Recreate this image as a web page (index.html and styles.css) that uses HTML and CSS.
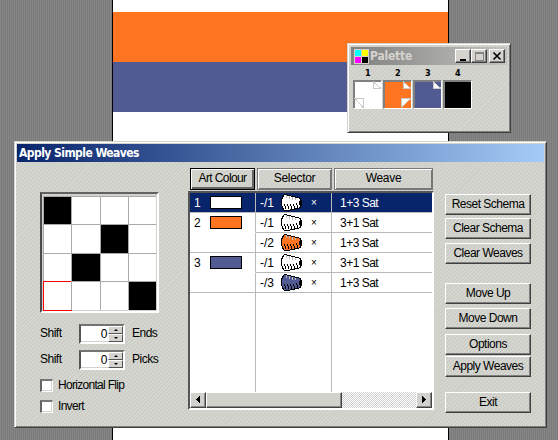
FILE: index.html
```html
<!DOCTYPE html>
<html lang="en">
<head>
<meta charset="utf-8">
<title>Apply Simple Weaves</title>
<link rel="stylesheet" href="styles.css">
</head>
<body>
<svg class="defs" width="0" height="0">
  <symbol id="cone" viewBox="0 0 22 19">
    <path class="yarn" d="M3.5 1.5 8.500 2.500 19.500 5.500 20.500 8V11L19.500 14.500 12 16.500 6 17.500 3 17 1.500 15 .5 11V7L1.500 4Z"/>
    <path class="thread" d="M3.500 11v2m1 0v3M6.500 11v2m1 0v3M9.500 11v2m1 0v3M12.500 11v2m1 0v3M15.500 10v2m1 0v3"/>
    <path class="shine" d="M5.500 2v3m3-2v3m3-2v3m3-2v2"/>
    <path d="M18 5h2v2h1v6h-1v2h-1V12h-1V8h1V6h-1z"/>
  </symbol>
</svg>
<main class="desktop">
  <section class="artwork"><div class="orange"></div><div class="indigo"></div></section>

  <section class="window palette">
    <header class="palette-title">
      <svg class="app-icon" width="15" height="15" shape-rendering="crispEdges"><path fill="#d4d0c8" d="M0 0h15v15H0z"/><path fill="#0ff" d="M1 1h6v6H1z"/><path fill="#ff0" d="M8 1h6v6H8z"/><path fill="#f0f" d="M1 8h6v6H1z"/><path d="M8 8h6v6H8z"/></svg>
      <span class="palette-name">Palette</span>
      <span class="caption"><svg width="12" height="10" shape-rendering="crispEdges"><path d="M3 8h6v2H3z"/></svg></span>
      <span class="caption"><svg width="12" height="10" shape-rendering="crispEdges"><path class="maximize" d="M2.5 1.5h8v8h-8zM2 2.5h9"/></svg></span>
      <span class="caption close"><svg width="12" height="10"><path class="cross" d="M2.5 1.5l7 7m0-7l-7 7"/></svg></span>
    </header>
    <div class="swatches">
      <div class="swatch"><b>1</b><svg width="29" height="29" shape-rendering="crispEdges"><path fill="#fff" d="M1 1h26v26H1z"/><path class="fold" d="M19.500 1v6.500H27zM1 17.500h8.500V27z"/></svg></div>
      <div class="swatch"><b>2</b><svg width="29" height="29" shape-rendering="crispEdges"><path fill="#ff7421" d="M1 1h26v26H1z"/><path class="fold" d="M19.500 1v6.500H27zM17.500 26v-8.500H27z"/></svg></div>
      <div class="swatch"><b>3</b><svg width="29" height="29" shape-rendering="crispEdges"><path fill="#525a94" d="M1 1h26v26H1z"/><path class="fold" d="M19.500 1v6.500H27z"/></svg></div>
      <div class="swatch"><b>4</b><svg width="29" height="29" shape-rendering="crispEdges"><path d="M1 1h26v26H1z"/></svg></div>
    </div>
  </section>

  <section class="window dialog">
    <header class="dialog-title"><span>Apply Simple Weaves</span></header>
    <div class="body">
      <div class="controls">
        <div class="weave-frame"><div class="weave">
          <i class="on"></i><i></i><i></i><i></i>
          <i></i><i></i><i class="on"></i><i></i>
          <i></i><i class="on"></i><i></i><i></i>
          <i class="cursor"></i><i></i><i></i><i class="on"></i>
        </div></div>
        <div class="shift"><label>Shift</label><div class="spin"><span>0</span><div class="steps"><i class="up"></i><i class="down"></i></div></div><label>Ends</label></div>
        <div class="shift"><label>Shift</label><div class="spin"><span>0</span><div class="steps"><i class="up"></i><i class="down"></i></div></div><label>Picks</label></div>
        <label class="check"><i></i><span>Horizontal Flip</span></label>
        <label class="check"><i></i><span>Invert</span></label>
      </div>

      <div class="list">
        <div class="heads"><div class="head focus">Art Colour</div><div class="head">Selector</div><div class="head">Weave</div></div>
        <div class="list-frame">
          <div class="table">
            <div class="row selected"><div class="art"><span>1</span><i class="chip white"></i></div><div class="sel"><span>-/1</span><svg class="cone"><use href="#cone"/></svg><b>×</b></div><div class="name">1+3 Sat</div></div>
            <div class="row joined"><div class="art"><span>2</span><i class="chip orange"></i></div><div class="sel"><span>-/1</span><svg class="cone"><use href="#cone"/></svg><b>×</b></div><div class="name">3+1 Sat</div></div>
            <div class="row"><div class="art"></div><div class="sel"><span>-/2</span><svg class="cone orange-yarn"><use href="#cone"/></svg><b>×</b></div><div class="name">1+3 Sat</div></div>
            <div class="row joined"><div class="art"><span>3</span><i class="chip indigo"></i></div><div class="sel"><span>-/1</span><svg class="cone"><use href="#cone"/></svg><b>×</b></div><div class="name">3+1 Sat</div></div>
            <div class="row"><div class="art"></div><div class="sel"><span>-/3</span><svg class="cone indigo-yarn"><use href="#cone"/></svg><b>×</b></div><div class="name">1+3 Sat</div></div>
            <div class="row rest"><div class="art"></div><div class="sel"></div><div class="name"></div></div>
          </div>
          <div class="scroll"><div class="arrow"><svg width="5" height="8" shape-rendering="crispEdges"><path d="M4 0v7L0 4V3z"/></svg></div><div class="thumb"></div><div class="track"></div><div class="arrow"><svg width="5" height="8" shape-rendering="crispEdges"><path d="M0 0v7l4-3V3z"/></svg></div></div>
        </div>
      </div>

      <div class="actions">
        <button>Reset Schema</button>
        <button class="gap3">Clear Schema</button>
        <button class="gap4">Clear Weaves</button>
        <button class="gap19">Move Up</button>
        <button class="gap4">Move Down</button>
        <button class="gap5">Options</button>
        <button class="gap1">Apply Weaves</button>
        <button class="gap15">Exit</button>
      </div>
    </div>
  </section>
</main>
</body>
</html>
```

FILE: styles.css
```css
* { box-sizing: border-box; }
body { margin: 0; font: 12px/14px "Liberation Sans", sans-serif; letter-spacing: -.5px; color: #000; }
i { font-style: normal; }
.defs { position: absolute; }
.desktop { position: relative; width: 558px; height: 440px; overflow: hidden; background: repeating-linear-gradient(90deg, #868686 0 1px, #7b7b7b 1px 2px); }
.artwork { width: 337px; height: 440px; margin-left: 112px; padding-top: 12px; background: #fff; border: solid #000; border-width: 0 1px; }
.artwork div { height: 50px; }
.orange { background: #ff7421; }
.indigo { background: #525a94; }
.window { position: absolute; background: repeating-linear-gradient(135deg, #d6d7d0 0 1.4px, #cccdc7 1.4px 2.8px); border: 1px solid; border-color: #d6d3ce #404040 #404040 #d6d3ce; box-shadow: inset 1px 1px #fff, inset -1px -1px #808080; }

.palette { left: 347px; top: 43px; width: 164px; height: 90px; padding: 3px; }
.palette-title { display: flex; height: 18px; padding: 2px 2px 0 3px; background: linear-gradient(90deg, #808080, #c3c3c0); }
.palette-name { width: 87px; margin: 0; padding-left: 1px; font: bold 12px/14px "DejaVu Sans Condensed", "DejaVu Sans", sans-serif; letter-spacing: -.2px; color: #d6d3ce; }
.caption { width: 16px; height: 14px; padding: 1px; background: #d6d3ce; border: 1px solid; border-color: #fff #404040 #404040 #fff; box-shadow: inset -1px -1px #808080; }
.caption svg { display: block; }
.close { margin-left: 2px; }
.maximize { fill: none; stroke: #858580; }
.cross { stroke: #000; stroke-width: 1.6; }
.app-icon { flex: none; }
.swatches { display: flex; gap: 1px; padding: 2px 0 0 2px; }
.swatch { width: 29px; text-align: center; }
.swatch b { display: block; height: 13px; font: bold 9px/13px "DejaVu Sans Condensed", sans-serif; }
.swatch svg { display: block; background: #d6d3ce; border: 1px solid; border-color: #808080 #fff #fff #808080; box-shadow: inset 1px 1px #808080; }
.fold { fill: #fff; stroke: #c9c9c6; }

.dialog { left: 14px; top: 141px; width: 533px; height: 287px; padding: 2px; }
.dialog-title { height: 18px; padding: 2px; background: linear-gradient(90deg, #08246b, #a5cbf7); color: #fff; font: bold 12px/14px "DejaVu Sans Condensed", sans-serif; letter-spacing: -.55px; white-space: nowrap; }
.body { display: flex; }
.controls { width: 148px; padding: 30px 0 0 23px; }
.weave-frame { width: 119px; height: 121px; padding: 2px 0 0 1px; border: 2px solid; border-color: #626262 #fff #fff #4a4a4a; }
.weave { display: grid; width: 114px; grid-template: 28px 29px 28px 29px / 28px 29px 28px 28px; background: linear-gradient(#fff, #fff) 0 0 / 113px 114px no-repeat; }
.weave i { border: solid #aaa; border-width: 1px 0 0 1px; }
.weave .on { background: #000; }
.weave .cursor { width: 29px; height: 30px; border: 1px solid #f00; }
.shift { display: grid; grid-template-columns: 39px 53px 1fr; height: 20px; margin-top: 6px; align-items: center; }
.shift label { padding-bottom: 2px; }
.weave-frame + .shift { margin-top: 11px; }
.spin { display: flex; width: 46px; height: 20px; background: #fff; border: 2px solid; border-color: #737373 #fff #fff #555; box-shadow: inset 0 -1px #d6d3ce; }
.spin > span { flex: 1; text-align: right; padding: 1px 1px 0 0; }
.steps { width: 15px; display: grid; grid-template-rows: 8px 8px; }
.steps i { display: grid; place-items: center; background: #d6d3ce; border: 1px solid; border-color: #fff #555 #555 #fff; }
.steps i::before { content: ""; border: 2px solid transparent; }
.steps .up::before { border-top: 0; border-bottom-color: #000; }
.steps .down::before { border-bottom: 0; border-top-color: #000; }
.check { display: flex; height: 13px; margin-top: 8px; line-height: 13px; letter-spacing: -.7px; white-space: nowrap; }
.shift + .check { margin-top: 9px; }
.check i { width: 13px; height: 13px; margin-right: 5px; background: #fff; border: solid; border-width: 2px 1px 1px 2px; border-color: #777 #fff #fff #666; box-shadow: inset -1px -1px #d6d3ce; }
.check + .check { margin-top: 8px; }

.list { width: 246px; margin-left: 23px; padding-top: 6px; }
.heads { display: flex; gap: 2px; height: 23px; padding: 0 0 1px 2px; }
.head { width: 75px; height: 22px; text-align: center; line-height: 19px; letter-spacing: -.3px; border: 1px solid #777; box-shadow: inset 1px 1px #fff, inset -1px -1px #777; }
.head.focus { width: 65px; letter-spacing: -.6px; border-color: #000; box-shadow: inset 1px 1px #fff, inset -2px -2px #666; }
.head:last-child { width: 99px; }
.list-frame { height: 219px; border: 2px solid; border-color: #555 #fff #fff #555; }
.table { height: 199px; display: flex; flex-direction: column; background: #fff; }
.row { display: grid; grid-template-columns: 66px 76px 1fr; flex: 0 0 20px; }
.row > div { display: flex; align-items: center; border-bottom: 1px solid #b9b9b9; }
.row .art, .row .sel { border-right: 1px solid #b9b9b9; }
.row.joined .art { border-bottom-color: #fff; }
.row.selected > div { background: #08246b; color: #fff; }
.row.rest { flex: 1; }
.row.rest > div { border-bottom: 0; }
.art span { width: 20px; padding-left: 4px; }
.chip { width: 32px; height: 13px; border: 1px solid #000; }
.white { background: #fff; }
.sel span { width: 25px; padding-left: 4px; letter-spacing: 0; }
.cone { width: 22px; height: 19px; flex: none; color: #fff; shape-rendering: crispEdges; }
.yarn { fill: currentColor; stroke: #000; }
.thread { fill: none; stroke: #000; }
.shine { stroke: #bbb; }
.orange-yarn { color: #ff7421; }
.indigo-yarn { color: #525a94; }
.sel b { font: 10px/10px "Liberation Sans", sans-serif; margin-left: 8px; }
.row .name { padding-left: 8px; }
.scroll { display: flex; height: 16px; }
.arrow { width: 16px; display: grid; place-items: center; }
.arrow, .thumb { background: #d1d2cc; border: 1px solid; border-color: #fff #444 #444 #fff; box-shadow: inset -1px -1px #888; }
.thumb { width: 136px; }
.track { flex: 1; background: repeating-conic-gradient(#d0d0ce 0 25%, #fff 0 50%) 0 0 / 2px 2px; }

.actions { display: flex; flex-direction: column; width: 86px; margin-left: 11px; padding-top: 32px; }
button { height: 21px; padding: 0 0 1px; border: 1px solid; border-color: #fff #404040 #404040 #fff; box-shadow: inset -1px -1px #808080; background: transparent; font: inherit; letter-spacing: inherit; color: #000; }
.gap1 { margin-top: 1px; }
.gap3 { margin-top: 3px; }
.gap4 { margin-top: 4px; }
.gap5 { margin-top: 5px; }
.gap15 { margin-top: 15px; }
.gap19 { margin-top: 19px; }
```
